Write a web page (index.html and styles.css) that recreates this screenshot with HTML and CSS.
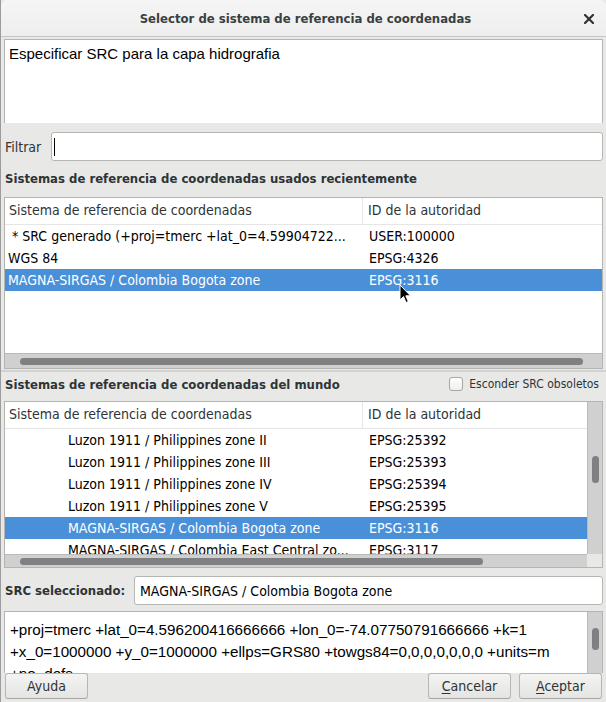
FILE: index.html
```html
<!DOCTYPE html>
<html lang="es">
<head>
<meta charset="utf-8">
<title>Selector de sistema de referencia de coordenadas</title>
<link rel="stylesheet" href="styles.css">
</head>
<body>
<div class="window">
  <div class="titlebar">
    <span class="title">Selector de sistema de referencia de coordenadas</span>
    <span class="close-btn">
      <svg width="10" height="10" viewBox="0 0 10 10"><path d="M1 1 L9 9 M9 1 L1 9" stroke="#2e3436" stroke-width="2.2" stroke-linecap="square"/></svg>
    </span>
  </div>
  <div class="content">
    <div class="message">Especificar SRC para la capa hidrografia</div>

    <div class="filter-row">
      <span class="label">Filtrar</span>
      <div class="entry filter-entry"><span class="caret"></span></div>
    </div>

    <div class="heading">Sistemas de referencia de coordenadas usados recientemente</div>

    <div class="table recent">
      <div class="thead">
        <div class="c1">Sistema de referencia de coordenadas</div>
        <div class="c2">ID de la autoridad</div>
      </div>
      <div class="tbody">
        <div class="row"><div class="c1">&nbsp;* SRC generado (+proj=tmerc +lat_0=4.59904722...</div><div class="c2">USER:100000</div></div>
        <div class="row"><div class="c1">WGS 84</div><div class="c2">EPSG:4326</div></div>
        <div class="row selected"><div class="c1">MAGNA-SIRGAS / Colombia Bogota zone</div><div class="c2">EPSG:3116</div></div>
      </div>
      <div class="hscroll"><div class="hthumb recent-thumb"></div></div>
    </div>

    <div class="splitter"></div>

    <div class="heading-row">
      <span class="heading">Sistemas de referencia de coordenadas del mundo</span>
      <label class="check"><span class="box"></span><span>Esconder SRC obsoletos</span></label>
    </div>

    <div class="table world">
      <div class="world-main">
        <div class="thead">
          <div class="c1">Sistema de referencia de coordenadas</div>
          <div class="c2">ID de la autoridad</div>
        </div>
        <div class="tbody">
          <div class="row"><div class="c1 indent">Luzon 1911 / Philippines zone II</div><div class="c2">EPSG:25392</div></div>
          <div class="row"><div class="c1 indent">Luzon 1911 / Philippines zone III</div><div class="c2">EPSG:25393</div></div>
          <div class="row"><div class="c1 indent">Luzon 1911 / Philippines zone IV</div><div class="c2">EPSG:25394</div></div>
          <div class="row"><div class="c1 indent">Luzon 1911 / Philippines zone V</div><div class="c2">EPSG:25395</div></div>
          <div class="row selected"><div class="c1 indent">MAGNA-SIRGAS / Colombia Bogota zone</div><div class="c2">EPSG:3116</div></div>
          <div class="row"><div class="c1 indent">MAGNA-SIRGAS / Colombia East Central zo...</div><div class="c2">EPSG:3117</div></div>
        </div>
      </div>
      <div class="vscroll"><div class="vthumb world-thumb"></div></div>
      <div class="hscroll"><div class="hthumb world-hthumb"></div></div>
      <div class="corner"></div>
    </div>

    <div class="src-row">
      <span class="label bold">SRC seleccionado:</span>
      <div class="entry src-entry">MAGNA-SIRGAS / Colombia Bogota zone</div>
    </div>

    <div class="proj">
      <div class="proj-text">+proj=tmerc +lat_0=4.596200416666666 +lon_0=-74.07750791666666 +k=1 +x_0=1000000 +y_0=1000000 +ellps=GRS80 +towgs84=0,0,0,0,0,0,0 +units=m +no_defs</div>
      <div class="vscroll"><div class="vthumb proj-thumb"></div></div>
    </div>

    <div class="buttons">
      <button class="btn">Ayuda</button>
      <span class="spacer"></span>
      <button class="btn"><u>C</u>ancelar</button>
      <button class="btn"><u>A</u>ceptar</button>
    </div>
  </div>

  <svg class="cursor" width="13" height="21" viewBox="0 0 13 21">
    <path d="M1 1 L1 16 L4.5 12.5 L7 18.5 L9.3 17.5 L6.8 11.8 L11.5 11.8 Z" fill="#000" stroke="#fff" stroke-width="1" stroke-linejoin="round"/>
  </svg>
</div>
</body>
</html>
```

FILE: styles.css
```css
* { box-sizing: border-box; }

html, body {
  margin: 0;
  padding: 0;
  background: #e8e8e7;
}

.window {
  position: relative;
  width: 606px;
  height: 702px;
  background: #e8e8e7;
  border-left: 1px solid #9c9c9c;
  display: flex;
  flex-direction: column;
  font-family: "DejaVu Sans Condensed", "DejaVu Sans", sans-serif;
  font-stretch: condensed;
  font-size: 14px;
  color: #000;
  overflow: hidden;
}

.titlebar {
  height: 37px;
  flex: none;
  background: linear-gradient(#f5f5f5, #eeeeee);
  border-bottom: 1px solid #c6c6c4;
  border-top-left-radius: 6px;
  border-top-right-radius: 6px;
  display: flex;
  align-items: center;
  position: relative;
}

.title {
  flex: 1;
  text-align: center;
  font-weight: bold;
  font-size: 13px;
  color: #3a3f41;
  padding-left: 4px;
}

.close-btn {
  position: absolute;
  right: 12px;
  top: 14px;
  width: 10px;
  height: 10px;
  display: flex;
}

.content {
  flex: 1;
  display: flex;
  flex-direction: column;
  padding: 0 3px 0 3px;
  min-height: 0;
}

.message {
  margin-top: 2px;
  height: 84px;
  flex: none;
  background: #fff;
  border: 1px solid #b4b4b2;
  border-bottom: none;
  font-family: "Liberation Sans", Arial, sans-serif;
  font-stretch: normal;
  font-size: 15px;
  padding: 5px 0 0 4px;
  color: #000;
}

.filter-row {
  margin-top: 9px;
  height: 29px;
  display: flex;
  align-items: center;
  flex: none;
}

.label {
  color: #2e3436;
  padding-left: 1px;
  width: 47px;
  flex: none;
}

.entry {
  flex: 1;
  height: 29px;
  background: #fff;
  border: 1px solid #b6b6b3;
  border-radius: 3px;
  display: flex;
  align-items: center;
}

.caret {
  display: block;
  width: 1px;
  height: 18px;
  background: #000;
  margin-left: 2px;
}

.heading {
  font-weight: bold;
  font-size: 13px;
  color: #2e3436;
  padding-left: 1px;
}

.content > .heading {
  margin-top: 8px;
  height: 20px;
  line-height: 20px;
  flex: none;
}

.table {
  background: #fff;
  border: 1px solid #b4b4b2;
  flex: none;
}

.recent {
  margin-top: 8px;
  height: 172px;
  display: flex;
  flex-direction: column;
}

.thead {
  height: 27px;
  flex: none;
  display: flex;
  border-bottom: 1px solid #e6e6e6;
  color: #2e3436;
}

.thead .c1 {
  width: 358px;
  border-right: 1px solid #e6e6e6;
  padding-left: 4px;
  line-height: 25px;
}

.thead .c2 {
  padding-left: 5px;
  line-height: 25px;
}

.tbody {
  flex: 1;
  overflow: hidden;
}

.row {
  height: 22px;
  display: flex;
  line-height: 22px;
}

.row .c1 {
  width: 359px;
  padding-left: 3px;
  white-space: nowrap;
  overflow: hidden;
}

.row .c1.indent {
  padding-left: 63px;
}

.row .c2 {
  padding-left: 5px;
  white-space: nowrap;
}

.row.selected {
  background: #4a90d9;
  color: #fff;
}

.hscroll {
  height: 15px;
  flex: none;
  background: #cfd0cf;
  border-top: 1px solid #b9bab9;
  display: flex;
  align-items: center;
}

.hthumb {
  height: 7px;
  border-radius: 4px;
  background: #7e8081;
}

.recent-thumb {
  margin-left: 15px;
  width: 563px;
}

.splitter {
  height: 5px;
  flex: none;
  margin: 0 -3px;
  background-image: radial-gradient(circle, #c4c4c2 0.6px, transparent 0.9px);
  background-size: 2px 2px;
  background-position: 0 1px;
  background-repeat: repeat-x;
}

.heading-row {
  height: 20px;
  flex: none;
  display: flex;
  align-items: center;
  justify-content: space-between;
}

.check {
  display: flex;
  align-items: center;
  gap: 6px;
  font-size: 12px;
  color: #2e3436;
  padding-right: 4px;
}

.box {
  width: 14px;
  height: 14px;
  border: 1px solid #a7a7a5;
  border-radius: 3px;
  background: linear-gradient(#ffffff, #eeeeec);
}

.world {
  margin-top: 7px;
  height: 167px;
  display: grid;
  grid-template-columns: 1fr 15px;
  grid-template-rows: 1fr 13px;
}

.world-main {
  display: flex;
  flex-direction: column;
  min-height: 0;
  overflow: hidden;
}

.vscroll {
  background: #cfd0cf;
  border-left: 1px solid #b9bab9;
  position: relative;
}

.vthumb {
  position: absolute;
  left: 4px;
  width: 7px;
  border-radius: 4px;
  background: #7e8081;
}

.world-thumb {
  top: 54px;
  height: 27px;
}

.world .hscroll {
  height: 13px;
  border-top: 1px solid #b9bab9;
}

.world-hthumb {
  margin-left: 15px;
  width: 463px;
}

.corner {
  background: #e8e8e7;
}

.src-row {
  margin-top: 8px;
  height: 29px;
  flex: none;
  display: flex;
  align-items: center;
}

.label.bold {
  font-weight: bold;
  font-size: 13px;
  width: 130px;
}

.src-entry {
  padding-left: 5px;
  color: #000;
}

.proj {
  margin-top: 6px;
  height: 62px;
  flex: none;
  background: #fff;
  border: 1px solid #b4b4b2;
  border-bottom: none;
  display: flex;
  overflow: hidden;
}

.proj-text {
  flex: 1;
  height: 61px;
  overflow: hidden;
  font-family: "Liberation Sans", Arial, sans-serif;
  font-stretch: normal;
  font-size: 15.2px;
  line-height: 22px;
  padding: 7px 0 0 5px;
}

.proj .vscroll {
  width: 15px;
  flex: none;
}

.proj-thumb {
  top: 16px;
  height: 22px;
}

.buttons {
  height: 26px;
  flex: none;
  display: flex;
  gap: 8px;
  padding-right: 1px;
  margin-left: 1px;
}

.spacer {
  flex: 1;
}

.btn {
  width: 83px;
  height: 26px;
  border: 1px solid #b6b6b3;
  border-bottom-color: #a6a6a3;
  border-radius: 3px;
  background: linear-gradient(#f4f4f3, #e4e4e2);
  font-family: "DejaVu Sans Condensed", "DejaVu Sans", sans-serif;
  font-stretch: condensed;
  font-size: 14px;
  color: #2e3436;
  padding: 0;
}

.btn u {
  text-decoration: underline;
  text-underline-offset: 2px;
}

.cursor {
  position: absolute;
  left: 398px;
  top: 284px;
}
```
